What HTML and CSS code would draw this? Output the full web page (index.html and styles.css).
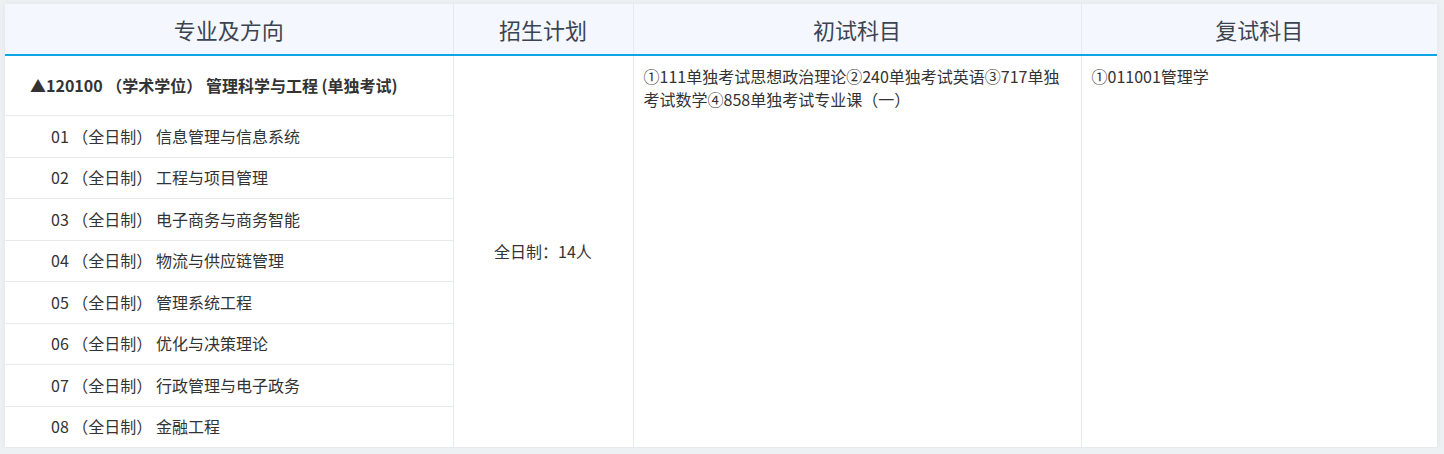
FILE: index.html
```html
<!DOCTYPE html>
<html lang="zh-CN">
<head>
    <meta charset="UTF-8">
    <title>专业目录</title>
    <link rel="stylesheet" href="styles.css">
</head>
<body>
    <div class="panel">
        <table class="major-table">
            <colgroup>
                <col class="c-major">
                <col class="c-plan">
                <col class="c-first">
                <col class="c-second">
            </colgroup>
            <thead>
                <tr>
                    <th>专业及方向</th>
                    <th>招生计划</th>
                    <th>初试科目</th>
                    <th>复试科目</th>
                </tr>
            </thead>
            <tbody>
                <tr class="major-row">
                    <td class="major-name">▲120100 （学术学位） 管理科学与工程 (单独考试)</td>
                    <td class="plan" rowspan="9">全日制：14人</td>
                    <td class="subjects" rowspan="9">①111单独考试思想政治理论②240单独考试英语③717单独考试数学④858单独考试专业课（一）</td>
                    <td class="subjects" rowspan="9">①011001管理学</td>
                </tr>
                <tr><td class="direction">01 （全日制） 信息管理与信息系统</td></tr>
                <tr><td class="direction">02 （全日制） 工程与项目管理</td></tr>
                <tr><td class="direction">03 （全日制） 电子商务与商务智能</td></tr>
                <tr><td class="direction">04 （全日制） 物流与供应链管理</td></tr>
                <tr><td class="direction">05 （全日制） 管理系统工程</td></tr>
                <tr><td class="direction">06 （全日制） 优化与决策理论</td></tr>
                <tr><td class="direction">07 （全日制） 行政管理与电子政务</td></tr>
                <tr><td class="direction">08 （全日制） 金融工程</td></tr>
            </tbody>
        </table>
    </div>
</body>
</html>
```

FILE: styles.css
```css
body {
    margin: 0;
    background: #eef1f4;
    font-family: "Microsoft YaHei", "Noto Sans CJK SC", "Noto Sans", sans-serif;
    color: #333;
}
.panel {
    margin: 4px 7px 0 5px;
    background: #fff;
    box-shadow: 0 0 6px rgba(0, 0, 0, 0.06);
}
.major-table {
    width: 100%;
    border-collapse: collapse;
    table-layout: fixed;
}
.c-major { width: 448px; }
.c-plan { width: 180px; }
.c-first { width: 448px; }
.major-table th {
    height: 50px;
    padding: 0;
    background: #f4f7fd;
    border-bottom: 2px solid #0ea5e6;
    border-left: 1px solid #e6eaef;
    font-size: 22px;
    font-weight: normal;
    color: #3b4450;
}
.major-table th:first-child {
    border-left: none;
}
.major-table td {
    padding: 0;
    border: 1px solid #e6eaef;
    font-size: 16px;
    line-height: 23px;
    color: #333;
}
.major-table td:first-child {
    border-left: none;
}
.major-table td:last-child {
    border-right: none;
}
.major-name {
    height: 59px;
    padding-left: 25px !important;
    font-weight: bold;
}
.direction {
    height: 40.5px;
    padding-left: 46px !important;
}
.plan {
    text-align: center;
    vertical-align: middle;
}
.subjects {
    vertical-align: top;
    padding: 9px 10px 8px !important;
}
```
